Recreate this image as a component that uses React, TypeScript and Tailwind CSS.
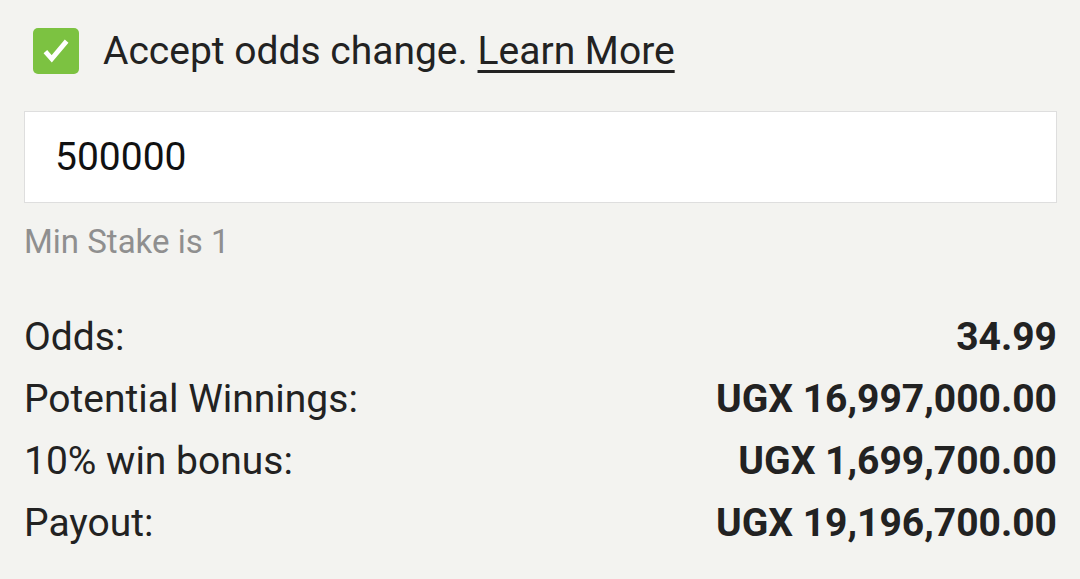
import React from "react";

const rows = [
  { label: "Odds:", value: "34.99" },
  { label: "Potential Winnings:", value: "UGX 16,997,000.00" },
  { label: "10% win bonus:", value: "UGX 1,699,700.00" },
  { label: "Payout:", value: "UGX 19,196,700.00" },
];

export default function App() {
  return (
    <div
      className="w-[1080px] h-[579px] bg-[#f3f3f0] overflow-hidden pl-[24px] pr-[23px] pt-[28px] text-[#222222]"
      style={{ fontFamily: "Roboto, 'Noto Sans', sans-serif" }}
    >
      <div className="flex items-center h-[46px] pl-[9px]">
        <div className="w-[46px] h-[46px] rounded-[5px] bg-[#7cc241] flex items-center justify-center">
          <svg width="34" height="34" viewBox="0 0 24 24" fill="none">
            <path d="M4.5 12.5l4.5 5L19.5 5" stroke="white" strokeWidth="3.4" strokeLinecap="butt" strokeLinejoin="miter" />
          </svg>
        </div>
        <div className="ml-[24px] text-[39px] leading-none">
          Accept odds change.{" "}
          <span className="underline underline-offset-[6px] decoration-[3px]">Learn More</span>
        </div>
      </div>
      <div className="mt-[37px] h-[92px] bg-white border border-[#dedede] flex items-center pl-[30px] text-[39px] text-[#111111]">
        500000
      </div>
      <div className="mt-[22px] text-[33px] leading-none text-[#8f8f8f]">Min Stake is 1</div>
      <div className="mt-[48px] flex flex-col">
        {rows.map((r) => (
          <div key={r.label} className="flex justify-between items-center h-[62px] text-[39px]">
            <span>{r.label}</span>
            <span className="font-bold">{r.value}</span>
          </div>
        ))}
      </div>
    </div>
  );
}
